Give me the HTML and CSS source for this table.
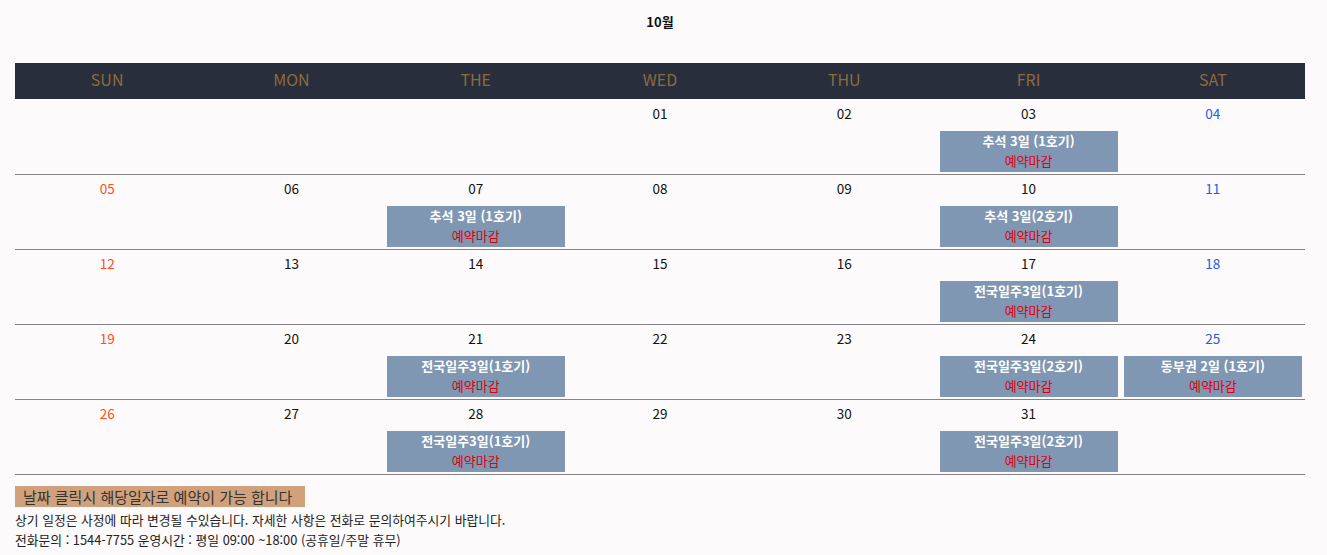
FILE: index.html
```html
<!DOCTYPE html>
<html lang="ko">
<head>
<meta charset="utf-8">
<title>10월 일정</title>
<link rel="stylesheet" href="styles.css">
</head>
<body>
<div class="wrap">
  <div class="month">10월</div>
  <div class="cal">
    <div class="head">
      <div>SUN</div><div>MON</div><div>THE</div><div>WED</div><div>THU</div><div>FRI</div><div>SAT</div>
    </div>
    <div class="week">
      <div class="day"></div>
      <div class="day"></div>
      <div class="day"></div>
      <div class="day"><span class="num">01</span></div>
      <div class="day"><span class="num">02</span></div>
      <div class="day"><span class="num">03</span><div class="ev"><b>추석 3일 (1호기)</b><span>예약마감</span></div></div>
      <div class="day sat"><span class="num">04</span></div>
    </div>
    <div class="week">
      <div class="day sun"><span class="num">05</span></div>
      <div class="day"><span class="num">06</span></div>
      <div class="day"><span class="num">07</span><div class="ev"><b>추석 3일 (1호기)</b><span>예약마감</span></div></div>
      <div class="day"><span class="num">08</span></div>
      <div class="day"><span class="num">09</span></div>
      <div class="day"><span class="num">10</span><div class="ev"><b>추석 3일(2호기)</b><span>예약마감</span></div></div>
      <div class="day sat"><span class="num">11</span></div>
    </div>
    <div class="week">
      <div class="day sun"><span class="num">12</span></div>
      <div class="day"><span class="num">13</span></div>
      <div class="day"><span class="num">14</span></div>
      <div class="day"><span class="num">15</span></div>
      <div class="day"><span class="num">16</span></div>
      <div class="day"><span class="num">17</span><div class="ev"><b>전국일주3일(1호기)</b><span>예약마감</span></div></div>
      <div class="day sat"><span class="num">18</span></div>
    </div>
    <div class="week">
      <div class="day sun"><span class="num">19</span></div>
      <div class="day"><span class="num">20</span></div>
      <div class="day"><span class="num">21</span><div class="ev"><b>전국일주3일(1호기)</b><span>예약마감</span></div></div>
      <div class="day"><span class="num">22</span></div>
      <div class="day"><span class="num">23</span></div>
      <div class="day"><span class="num">24</span><div class="ev"><b>전국일주3일(2호기)</b><span>예약마감</span></div></div>
      <div class="day sat"><span class="num">25</span><div class="ev"><b>동부권 2일 (1호기)</b><span>예약마감</span></div></div>
    </div>
    <div class="week">
      <div class="day sun"><span class="num">26</span></div>
      <div class="day"><span class="num">27</span></div>
      <div class="day"><span class="num">28</span><div class="ev"><b>전국일주3일(1호기)</b><span>예약마감</span></div></div>
      <div class="day"><span class="num">29</span></div>
      <div class="day"><span class="num">30</span></div>
      <div class="day"><span class="num">31</span><div class="ev"><b>전국일주3일(2호기)</b><span>예약마감</span></div></div>
      <div class="day sat"></div>
    </div>
  </div>
  <div class="notice">날짜 클릭시 해당일자로 예약이 가능 합니다</div>
  <p class="info">상기 일정은 사정에 따라 변경될 수있습니다. 자세한 사항은 전화로 문의하여주시기 바랍니다.</p>
  <p class="info">전화문의 : 1544-7755 운영시간 : 평일 09:00 ~18:00 (공휴일/주말 휴무)</p>
</div>
</body>
</html>
```
FILE: styles.css
```css
* { box-sizing: border-box; }
html, body { margin: 0; padding: 0; background: #fcfafb; }
body {
  font-family: "Noto Sans CJK KR", "Noto Sans", sans-serif;
  color: #111;
}
.wrap { padding: 0 22px 0 15px; }
.month {
  text-align: center;
  font-size: 13px;
  font-weight: bold;
  line-height: 20px;
  padding-top: 12px;
  height: 63px;
}
.head {
  display: grid;
  grid-template-columns: repeat(7, 1fr);
  background: #282e3b;
  height: 36px;
  text-align: center;
  color: #8c6c3e;
  font-size: 16px;
  line-height: 33px;
  margin-bottom: 1px;
}
.week {
  display: grid;
  grid-template-columns: repeat(7, 1fr);
  height: 75px;
  border-bottom: 1px solid #858385;
}
.day {
  display: flex;
  flex-direction: column;
  align-items: center;
  padding: 3px 3px 0;
}
.num { font-size: 13.5px; line-height: 20px; height: 20px; }
.sun .num { color: #ff4f1a; }
.sat .num { color: #2160e0; }
.ev {
  margin-top: 8px;
  width: 178px;
  height: 41px;
  background: #7f97b2;
  display: flex;
  flex-direction: column;
  align-items: center;
  font-size: 13px;
  line-height: 20px;
}
.ev b { color: #fff; font-weight: bold; }
.ev span { color: #dd0010; }
.notice {
  margin-top: 11px;
  display: block;
  background: #d0a17c;
  color: #333;
  font-size: 15px;
  line-height: 21px;
  padding: 0 8px;
  width: 290px;
  white-space: nowrap;
}
.info {
  margin: 0;
  font-size: 12.8px;
  line-height: 20px;
  color: #222;
}
.notice + .info { margin-top: 3px; }
```
